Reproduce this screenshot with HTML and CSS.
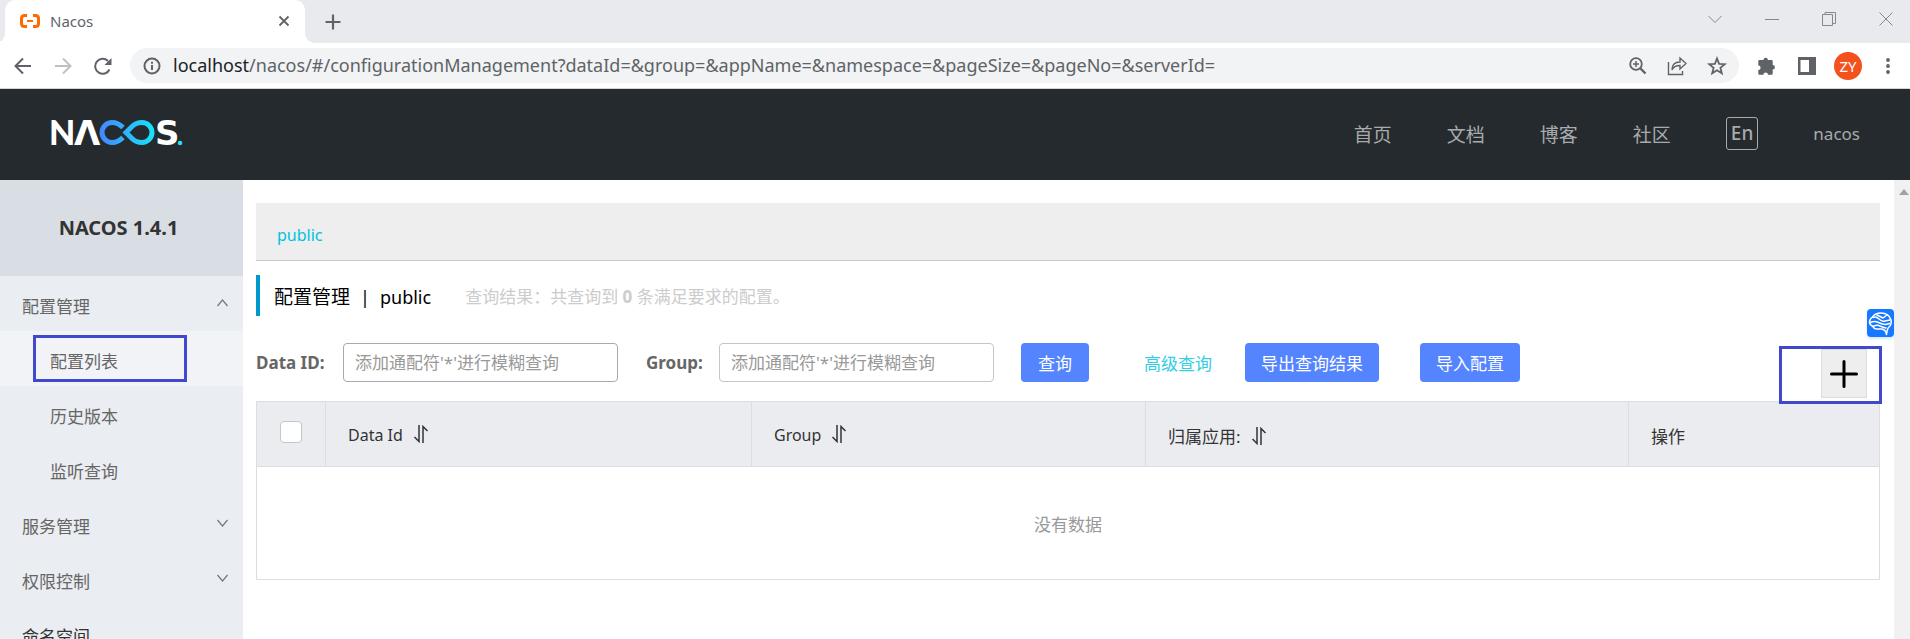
FILE: index.html
```html
<!DOCTYPE html>
<html lang="zh-CN">
<head>
<meta charset="utf-8">
<title>Nacos</title>
<link rel="stylesheet" href="styles.css">
</head>
<body>
<div class="tabstrip">
  <div class="tab">
    <svg class="favicon" width="20" height="14" viewBox="0 0 20 14" fill="none" stroke="#ff6a00" stroke-width="3"><path d="M7 1.500H4.500Q1.500 1.500 1.500 4.500v5q0 3 3 3H7M13 1.500h2.500q3 0 3 3v5q0 3-3 3H13"/><path d="M7 7h6" stroke-width="2"/></svg>
    <span class="tab-title">Nacos</span>
    <button class="icon-btn" aria-label="关闭标签页"><svg width="12" height="12" viewBox="0 0 12 12" stroke="#5f6368" stroke-width="1.800"><path d="M1.500 1.500l9 9M10.500 1.500l-9 9"/></svg></button>
  </div>
  <button class="icon-btn new-tab" aria-label="新标签页"><svg width="16" height="16" viewBox="0 0 16 16" stroke="#5f6368" stroke-width="2.200"><path d="M8 0.500v15M0.500 8h15"/></svg></button>
  <div class="window-controls">
    <button class="icon-btn" aria-label="搜索标签页"><svg width="14" height="14" viewBox="0 0 14 14" fill="none" stroke="#888"><path d="M.5 4L7 10.500 13.500 4"/></svg></button>
    <button class="icon-btn" aria-label="最小化"><svg width="14" height="14" viewBox="0 0 14 14" stroke="#888"><path d="M0 7.500h14"/></svg></button>
    <button class="icon-btn" aria-label="还原"><svg width="14" height="14" viewBox="0 0 14 14" fill="none" stroke="#888"><path d="M.5 2.500h10v11H.5zM3 2.500V.5h10.500v11H11"/></svg></button>
    <button class="icon-btn" aria-label="关闭"><svg width="14" height="14" viewBox="0 0 14 14" stroke="#888"><path d="M.5.5l13 13M13.500.5l-13 13"/></svg></button>
  </div>
</div>
<div class="toolbar">
  <div class="nav-buttons">
    <button class="icon-btn" aria-label="后退"><svg width="18" height="18" viewBox="0 0 18 18" fill="none" stroke="#5f6368" stroke-width="2"><path d="M17 9H2M9 1.500L1.500 9 9 16.500"/></svg></button>
    <button class="icon-btn" aria-label="前进"><svg width="18" height="18" viewBox="0 0 18 18" fill="none" stroke="#bdc1c6" stroke-width="2"><path d="M1 9h15M9 1.500L16.500 9 9 16.500"/></svg></button>
    <button class="icon-btn" aria-label="重新加载"><svg width="18" height="18" viewBox="0 0 18 18" fill="none" stroke="#5f6368" stroke-width="2"><path d="M15.500 12.500A7.500 7.500 0 1 1 14 4"/><path d="M17.500 1v7h-7z" fill="#5f6368" stroke="none"/></svg></button>
  </div>
  <div class="address">
    <svg width="18" height="18" viewBox="0 0 18 18" fill="none" stroke="#5f6368" stroke-width="2"><circle cx="9" cy="9" r="7.500"/><path d="M9 8v5M9 4.800v2"/></svg>
    <span class="url"><span class="host">localhost</span>/nacos/#/configurationManagement?dataId=&amp;group=&amp;appName=&amp;namespace=&amp;pageSize=&amp;pageNo=&amp;serverId=</span>
    <div class="address-icons">
      <button class="icon-btn" aria-label="缩放"><svg width="18" height="18" viewBox="0 0 18 18" fill="none" stroke="#5f6368" stroke-width="1.800"><circle cx="7" cy="7" r="5.800"/><path d="M11.500 11.500l5 5" stroke-width="2.400"/><path d="M4 7h6M7 4v6" stroke-width="1.500"/></svg></button>
      <button class="icon-btn" aria-label="分享"><svg width="20" height="20" viewBox="0 0 20 20" fill="none" stroke="#5f6368" stroke-width="1.400"><path d="M1.500 6v12.500h14V15"/><path d="M5 14q0-8 8-8V2l6 5.500-6 5.500V9.500Q7 9.500 5 14z"/></svg></button>
      <button class="icon-btn" aria-label="收藏"><svg width="20" height="20" viewBox="0 0 20 20" fill="none" stroke="#5f6368" stroke-width="1.800"><path d="M10 2.500l2.100 5.300 5.700.4-4.400 3.600 1.400 5.500L10 14.300l-4.800 3 1.400-5.500L2.200 8.200l5.700-.4z"/></svg></button>
    </div>
  </div>
  <div class="ext-icons">
    <button class="icon-btn" aria-label="扩展程序"><svg width="18" height="18" viewBox="0 0 18 18" fill="#5f6368"><path d="M1.500 3H5.500a2.200 2.200 0 0 1 4.400 0H13.500q1.200 0 1.200 1.200V8a2.200 2.200 0 0 1 0 4.400v4.100q0 1.300-1.200 1.300H10a2.300 2.300 0 0 0-4.600 0H1.500Q.3 17.800.3 16.500V13a2.300 2.300 0 0 0 0-4.600V4.200Q.3 3 1.500 3z"/></svg></button>
    <button class="icon-btn" aria-label="侧边栏"><svg width="18" height="18" viewBox="0 0 18 18"><path d="M0 0h18v18H0z" fill="#5f6368"/><path d="M2.500 3H11v12H2.500z" fill="#fff"/></svg></button>
    <button class="avatar">ZY</button>
    <button class="icon-btn" aria-label="菜单"><svg width="4" height="18" viewBox="0 0 4 18" fill="#5f6368"><circle cx="2" cy="3" r="1.900"/><circle cx="2" cy="9" r="1.900"/><circle cx="2" cy="15" r="1.900"/></svg></button>
  </div>
</div>
<header class="header">
  <svg class="logo" width="138" height="50" viewBox="-4 -12 138 50" role="img" aria-label="NACOS">
    <defs><linearGradient id="loop" gradientUnits="userSpaceOnUse" x1="50" x2="105" y1="0" y2="0"><stop offset="0" stop-color="#4387ff"/><stop offset="1" stop-color="#18e4f8"/></linearGradient></defs>
    <text class="logo-n" x="-1" y="25">N</text>
    <text class="logo-wide" x="24" y="25">Λ</text>
    <path d="M73 7.500Q68 2.500 62 2.500a10 10 0 0 0 0 20q6 0 11-5M76 12.500L82 6.500Q86 2.500 92 2.500a10 10 0 0 1 0 20q-6 0-10-4z" fill="none" stroke="url(#loop)" stroke-width="5"/>
    <text class="logo-wide" x="105" y="25">S</text>
    <circle cx="130" cy="23" r="2.300" fill="#18e4f8"/>
  </svg>
  <nav class="topnav">
    <a href="#">首页</a><a href="#">文档</a><a href="#">博客</a><a href="#">社区</a>
    <button class="lang">En</button>
    <a class="user" href="#">nacos</a>
  </nav>
</header>
<div class="page">
  <aside class="sidebar">
    <div class="side-title">NACOS 1.4.1</div>
    <nav class="menu">
      <a class="item" href="#">配置管理<svg width="11" height="8" viewBox="0 0 11 8" fill="none" stroke="#777" stroke-width="1.200"><path d="M.5 7l5-6 5 6"/></svg></a>
      <a class="item sub active" href="#">配置列表<span class="mark mark-menu"></span></a>
      <a class="item sub" href="#">历史版本</a>
      <a class="item sub" href="#">监听查询</a>
      <a class="item" href="#">服务管理<svg width="11" height="8" viewBox="0 0 11 8" fill="none" stroke="#777" stroke-width="1.200"><path d="M.5 1l5 6 5-6"/></svg></a>
      <a class="item" href="#">权限控制<svg width="11" height="8" viewBox="0 0 11 8" fill="none" stroke="#777" stroke-width="1.200"><path d="M.5 1l5 6 5-6"/></svg></a>
      <a class="item dark" href="#">命名空间</a>
    </nav>
  </aside>
  <main class="content">
    <div class="namespace"><a href="#">public</a></div>
    <div class="heading">
      <h1>配置管理<span class="heading-ns"><span class="bar">|</span>public</span></h1>
      <p>查询结果：共查询到 <strong>0</strong> 条满足要求的配置。</p>
    </div>
    <form class="search">
      <label for="data-id">Data ID:</label>
      <input class="field field-focus" id="data-id" type="text" placeholder="添加通配符'*'进行模糊查询">
      <label class="label-group" for="group">Group:</label>
      <input class="field" id="group" type="text" placeholder="添加通配符'*'进行模糊查询">
      <button class="btn btn-query" type="button">查询</button>
      <a class="advanced" href="#">高级查询</a>
      <button class="btn" type="button">导出查询结果</button>
      <button class="btn btn-import" type="button">导入配置</button>
      <div class="add-wrap">
        <button class="add" type="button" aria-label="新建配置"><svg width="28" height="28" viewBox="0 0 28 28" stroke="#000" stroke-width="3" stroke-linecap="round"><path d="M14 1.500v25M1.500 14h25"/></svg></button>
        <span class="mark mark-add"></span>
      </div>
    </form>
    <table class="grid">
      <colgroup><col class="c-check"><col class="c-id"><col class="c-group"><col class="c-app"><col class="c-op"></colgroup>
      <thead><tr>
        <th class="check"><input type="checkbox" aria-label="全选"></th>
        <th>Data Id<svg class="sort" width="16" height="18" viewBox="0 0 16 18" fill="none" stroke="#333" stroke-width="1.500"><path d="M6 0v16.500L1.500 12M10 18V1.500L14.500 6"/></svg></th>
        <th>Group<svg class="sort" width="16" height="18" viewBox="0 0 16 18" fill="none" stroke="#333" stroke-width="1.500"><path d="M6 0v16.500L1.500 12M10 18V1.500L14.500 6"/></svg></th>
        <th class="han">归属应用:<svg class="sort" width="16" height="18" viewBox="0 0 16 18" fill="none" stroke="#333" stroke-width="1.500"><path d="M6 0v16.500L1.500 12M10 18V1.500L14.500 6"/></svg></th>
        <th class="han">操作</th>
      </tr></thead>
      <tbody><tr><td colspan="5">没有数据</td></tr></tbody>
    </table>
    <button class="assistant" aria-label="助手"><svg width="25" height="25" viewBox="0 0 25 25" fill="none" stroke="#fff" stroke-width="1.500" stroke-linecap="round" stroke-linejoin="round"><path d="M18.500 23.500Q18 19 14 18H8.500Q6 18 5 15.500 1.500 14 1.500 11 1.500 8 4.500 6 7 2 13 2q8 0 10 7 1 4-2 7-2 2-2.500 7.500z"/><path d="M5 6.500Q8 5 11 8t6 2l5-1M2.500 11.500q4-2 8 0t7 2l4-1M5 15.500q4-2 7-.500t6 2M9 4l6 3 4-3"/></svg></button>
  </main>
  <div class="scrollbar"><svg width="10" height="6" viewBox="0 0 10 6"><path d="M0 6l5-6 5 6z" fill="#a3a3a3"/></svg></div>
</div>
</body>
</html>
```
FILE: styles.css
```css
* { box-sizing: border-box; }
body {
  margin: 0;
  height: 100vh;
  overflow: hidden;
  display: flex;
  flex-direction: column;
  background: #fff;
  font-family: "Noto Sans", "Noto Sans CJK SC", sans-serif;
  font-size: 16px;
  color: #333;
}
a { color: inherit; text-decoration: none; }
button, input { font: inherit; }
svg { display: block; flex: none; }
.icon-btn { display: block; padding: 0; border: 0; background: none; }

/* Browser chrome */
.tabstrip {
  flex: none;
  height: 43px;
  display: flex;
  align-items: center;
  padding: 0 17px 6px 5px;
  background: #e8eaed;
}
.tab {
  position: relative;
  height: 43px;
  margin-bottom: -6px;
  width: 300px;
  display: flex;
  align-items: center;
  gap: 10px;
  padding: 0 15px 1px;
  background: #fff;
  border-radius: 10px 10px 0 0;
}
.tab::before, .tab::after {
  content: "";
  position: absolute;
  bottom: 0;
  width: 10px;
  height: 10px;
}
.tab::before { right: 100%; background: radial-gradient(circle at 0 0, transparent 10px, #fff 10px); }
.tab::after { left: 100%; background: radial-gradient(circle at 100% 0, transparent 10px, #fff 10px); }
.tab-title { flex: 1; font-size: 15px; color: #5f6368; }
.new-tab { margin: 6px 0 0 20px; }
.window-controls { margin-left: auto; display: flex; gap: 43px; }
.toolbar {
  flex: none;
  height: 46px;
  display: flex;
  align-items: center;
  padding: 0 20px 0 14px;
  border-bottom: 1px solid #d5d7da;
}
.nav-buttons { display: flex; gap: 22px; margin-right: 18px; }
.address {
  flex: 1;
  height: 35px;
  display: flex;
  align-items: center;
  padding: 0 12px 0 13px;
  border-radius: 18px;
  background: #f1f3f4;
}
.url { margin-left: 12px; font-size: 18px; line-height: 32px; padding-bottom: 2px; color: #5f6368; white-space: nowrap; }
.host { color: #202124; }
.address-icons { display: flex; align-items: center; gap: 20px; margin-left: auto; }
.ext-icons { display: flex; align-items: center; gap: 18px; margin-left: 19px; }
.ext-icons .icon-btn + .icon-btn { margin-left: 4px; }
.avatar {
  width: 28px;
  height: 28px;
  padding: 0;
  border: 0;
  border-radius: 50%;
  background: #f4511e;
  color: #fff;
  font-size: 15px;
}
.avatar + .icon-btn { margin-left: 6px; }

/* Site header */
.header {
  flex: none;
  height: 91px;
  display: flex;
  align-items: center;
  justify-content: space-between;
  padding: 0 50px 2px 46px;
  background: #252a2f;
}
.logo { margin-bottom: 2px; }
.logo-n, .logo-wide { font-size: 34px; fill: #fff; }
.logo-n { font-family: Lato, sans-serif; font-weight: 900; }
.logo-wide { font-family: "DejaVu Sans", sans-serif; font-weight: 700; }
.topnav { display: flex; align-items: center; gap: 55px; font-size: 19px; color: #a8aaac; }
.lang {
  height: 33px;
  padding: 0 4px;
  border: 1px solid #a8aaac;
  border-radius: 3px;
  background: none;
  color: inherit;
  font-weight: 500;
  line-height: 29px;
}
.user { font-size: 17px; }

/* Layout */
.page { flex: 1; min-height: 0; display: flex; }
.sidebar { flex: none; width: 243px; background: #eaedf1; overflow: hidden; }
.side-title {
  height: 96px;
  padding-right: 6px;
  background: #d9dde4;
  font-size: 20px;
  font-weight: 700;
  line-height: 96px;
  text-align: center;
}
.item {
  position: relative;
  height: 55px;
  display: flex;
  align-items: center;
  justify-content: space-between;
  padding: 4px 15px 0 22px;
  font-size: 17px;
  color: #666;
}
.item svg { margin-bottom: 6px; }
.sub { padding-left: 50px; }
.active { background: #f2f3f7; }
.dark { color: #333; }
.mark { position: absolute; border: 3px solid #4048cc; pointer-events: none; }
.mark-menu { left: 33px; top: 4px; width: 154px; height: 47px; }

.content { position: relative; flex: 1; min-width: 0; padding: 23px 14px 0 13px; }
.namespace {
  height: 58px;
  padding: 6px 21px 0;
  border-bottom: 1px solid #ccc;
  background: #eee;
  color: #00c1de;
  line-height: 52px;
}
.heading {
  height: 41px;
  display: flex;
  align-items: center;
  gap: 34px;
  margin-top: 14px;
  padding-left: 14px;
  border-left: 4px solid #09c;
}
.heading h1 { margin: 0; font-size: 19px; font-weight: 400; color: #000; }
.heading-ns { font-size: 18px; }
.bar { margin: 0 10px; }
.heading p { margin: 0; font-size: 17px; color: #ccc; }
.search { display: flex; align-items: center; height: 39px; margin-top: 27px; white-space: nowrap; }
.search label { width: 87px; font-size: 17px; font-weight: 700; color: #666; }
.search .label-group { width: 73px; margin-left: 28px; }
.field {
  width: 275px;
  height: 39px;
  padding: 0 11px;
  border: 1px solid #c4c6cf;
  border-radius: 4px;
  background: #fff;
  font-size: 17px;
}
.field-focus { border-color: #a7a9b4; }
.field::placeholder { color: #999; opacity: 1; }
.btn {
  height: 39px;
  padding: 0 16px;
  border: 0;
  border-radius: 4px;
  background: #5584ff;
  color: #fff;
  font-size: 17px;
}
.btn-query { margin-left: 27px; padding: 0 17px; }
.btn-import { margin-left: 41px; }
.advanced { margin: 0 33px 0 55px; color: #33cde5; font-size: 17px; }
.add-wrap { position: relative; align-self: flex-start; margin: 6px 13px 0 auto; }
.add {
  display: grid;
  place-items: center;
  width: 46px;
  height: 49px;
  padding: 0;
  border: 1px solid #ddd;
  background: #eee;
}
.mark-add { top: -3px; right: -15px; width: 103px; height: 58px; }

.grid { width: 100%; margin-top: 19px; table-layout: fixed; border-collapse: collapse; border: 1px solid #dcdee3; }
.c-check { width: 69px; }
.c-id { width: 426px; }
.c-group { width: 394px; }
.c-app { width: 483px; }
.grid th {
  height: 65px;
  padding: 2px 22px 0;
  border: 1px solid #dcdee3;
  background: #ebecf0;
  font-size: 16px;
  font-weight: 400;
  text-align: left;
}
.grid .han { font-size: 17px; }
.grid .check { padding: 0; text-align: center; }
.check input {
  appearance: none;
  width: 22px;
  height: 22px;
  margin: 0 0 4px 0;
  border: 1px solid #c4c6cf;
  border-radius: 4px;
  background: #fff;
  vertical-align: middle;
}
.sort { display: inline-block; margin-left: 10px; vertical-align: -2px; }
.grid td { height: 113px; padding: 0; font-size: 17px; color: #999; text-align: center; }
.assistant {
  position: absolute;
  top: 129px;
  right: 0;
  display: grid;
  place-items: center;
  width: 27px;
  height: 28px;
  padding: 0;
  border: 0;
  border-radius: 4px;
  background: #1677ff;
  box-shadow: 0 2px 3px #d6e8ff;
}
.scrollbar { flex: none; width: 16px; padding: 9px 0 0 5px; background: #f1f1f1; }
```
